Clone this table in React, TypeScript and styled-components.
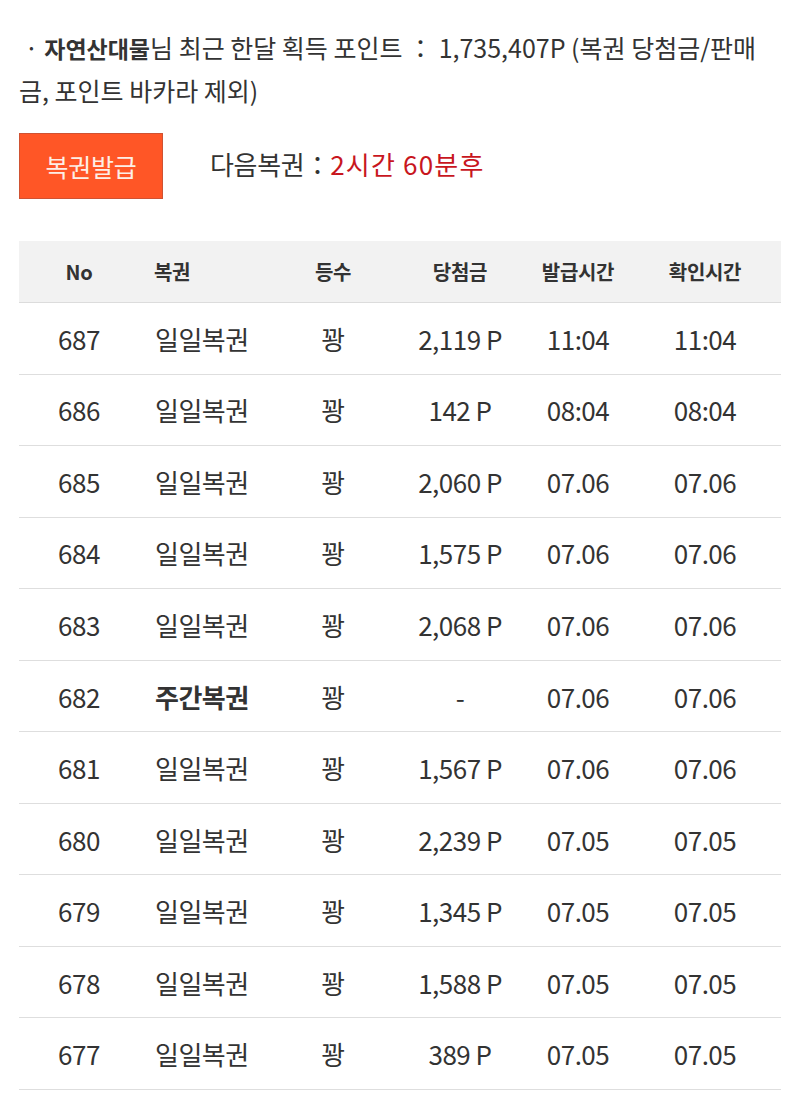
import React from "react";
import styled, { createGlobalStyle } from "styled-components";

const Global = createGlobalStyle`
  html, body { margin: 0; padding: 0; background: #fff; }
  body {
    font-family: "Noto Sans CJK KR", "Noto Sans", sans-serif;
    color: #333;
  }
`;

const Page = styled.div`
  padding: 26px 19px 0 19px;
  width: 762px;
`;

const Summary = styled.p`
  margin: 0;
  font-size: 25px;
  line-height: 42px;
  letter-spacing: 0;
  color: #333;
  width: 762px;
`;

const Name = styled.b`
  font-weight: 700;
  font-size: 23px;
`;

const Actions = styled.div`
  display: flex;
  align-items: center;
  gap: 47px;
  margin-top: 22px;
`;

const IssueButton = styled.button`
  width: 144px;
  height: 66px;
  background: #ff5626;
  border: 1px solid #cf5232;
  color: #fdeee6;
  font-family: inherit;
  font-size: 25px;
  letter-spacing: -0.2px;
  padding: 0;
  cursor: pointer;
`;

const NextInfo = styled.div`
  font-size: 26px;
  letter-spacing: -0.3px;
  color: #333;
  margin-top: -6px;
`;

const Remain = styled.span`
  color: #c8161e;
  letter-spacing: 1.2px;
`;

const Table = styled.div`
  margin-top: 42px;
  display: grid;
  grid-template-columns: 120px 134px 120px 134px 102px 152px;
`;

const HeadRow = styled.div`
  display: contents;
`;

const HeadCell = styled.div<{ $left?: boolean }>`
  height: 61px;
  background: #f2f2f2;
  border-bottom: 1px solid #dcdcdc;
  display: flex;
  align-items: center;
  justify-content: ${(p) => (p.$left ? "flex-start" : "center")};
  padding-left: ${(p) => (p.$left ? "15px" : "0")};
  font-size: 20px;
  font-weight: 700;
  letter-spacing: -0.3px;
  color: #333;
`;

const Row = styled.div`
  display: contents;
`;

const Cell = styled.div<{ $left?: boolean; $bold?: boolean }>`
  height: 70.55px;
  border-bottom: 1px solid #dedede;
  display: flex;
  align-items: center;
  justify-content: ${(p) => (p.$left ? "flex-start" : "center")};
  padding-left: ${(p) => (p.$left ? "16px" : "0")};
  font-size: 26px;
  font-weight: ${(p) => (p.$bold ? 700 : 400)};
  letter-spacing: -0.5px;
  color: #333;
`;

type Item = {
  no: number;
  name: string;
  weekly?: boolean;
  prize: string;
  issued: string;
  checked: string;
};

const rows: Item[] = [
  { no: 687, name: "일일복권", prize: "2,119 P", issued: "11:04", checked: "11:04" },
  { no: 686, name: "일일복권", prize: "142 P", issued: "08:04", checked: "08:04" },
  { no: 685, name: "일일복권", prize: "2,060 P", issued: "07.06", checked: "07.06" },
  { no: 684, name: "일일복권", prize: "1,575 P", issued: "07.06", checked: "07.06" },
  { no: 683, name: "일일복권", prize: "2,068 P", issued: "07.06", checked: "07.06" },
  { no: 682, name: "주간복권", weekly: true, prize: "-", issued: "07.06", checked: "07.06" },
  { no: 681, name: "일일복권", prize: "1,567 P", issued: "07.06", checked: "07.06" },
  { no: 680, name: "일일복권", prize: "2,239 P", issued: "07.05", checked: "07.05" },
  { no: 679, name: "일일복권", prize: "1,345 P", issued: "07.05", checked: "07.05" },
  { no: 678, name: "일일복권", prize: "1,588 P", issued: "07.05", checked: "07.05" },
  { no: 677, name: "일일복권", prize: "389 P", issued: "07.05", checked: "07.05" },
];

export default function App() {
  return (
    <>
      <Global />
      <Page>
        <Summary>
          &nbsp;· <Name>자연산대물</Name>님 최근 한달 획득 포인트 ： 1,735,407P (복권 당첨금/판매금, 포인트 바카라 제외)
        </Summary>
        <Actions>
          <IssueButton>복권발급</IssueButton>
          <NextInfo>
            다음복권：<Remain>2시간 60분후</Remain>
          </NextInfo>
        </Actions>
        <Table>
          <HeadRow>
            <HeadCell>No</HeadCell>
            <HeadCell $left>복권</HeadCell>
            <HeadCell>등수</HeadCell>
            <HeadCell>당첨금</HeadCell>
            <HeadCell>발급시간</HeadCell>
            <HeadCell>확인시간</HeadCell>
          </HeadRow>
          {rows.map((r) => (
            <Row key={r.no}>
              <Cell>{r.no}</Cell>
              <Cell $left $bold={r.weekly}>{r.name}</Cell>
              <Cell>꽝</Cell>
              <Cell>{r.prize}</Cell>
              <Cell>{r.issued}</Cell>
              <Cell>{r.checked}</Cell>
            </Row>
          ))}
        </Table>
      </Page>
    </>
  );
}
